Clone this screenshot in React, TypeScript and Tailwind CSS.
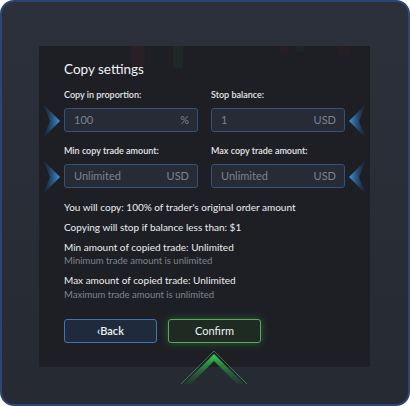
import React from "react";

const Chevron = ({ side }: { side: "left" | "right" }) => {
  const id = `chev-${side}`;
  return (
    <svg width="20" height="36" viewBox="0 0 20 36" className="block">
      <defs>
        <linearGradient id={id} x1={side === "left" ? "0" : "1"} y1="0" x2={side === "left" ? "1" : "0"} y2="0">
          <stop offset="0" stopColor="#1b3a66" stopOpacity="0.2" />
          <stop offset="1" stopColor="#3d9be9" stopOpacity="1" />
        </linearGradient>
      </defs>
      {side === "left" ? (
        <polygon points="1,1 18,18 1,35 8,18" fill={`url(#${id})`} />
      ) : (
        <polygon points="19,1 2,18 19,35 12,18" fill={`url(#${id})`} />
      )}
    </svg>
  );
};

const Field = ({ label, value, unit }: { label: string; value: string; unit: string }) => (
  <div className="flex flex-col">
    <div className="h-[14px] text-[9px] leading-[14px] font-semibold text-[#e4e6ea]">{label}</div>
    <div className="mt-[6px] h-[24px] flex items-center justify-between pl-[9px] pr-[8px] rounded-[3px] border border-[#35537a] bg-[#262b35] text-[11px] text-[#7d838e]">
      <span>{value}</span>
      <span>{unit}</span>
    </div>
  </div>
);

export default function App() {
  return (
    <div
      className="w-[410px] h-[406px] overflow-hidden rounded-[14px] border-2 border-[#2c4575] bg-gradient-to-b from-[#2c303a] to-[#262a33] pt-[44px] pl-[37px]"
      style={{ fontFamily: 'Lato, "Open Sans", sans-serif' }}
    >
      <div className="relative w-[331px] h-[321px] bg-[#1d1f24] pl-[25px] pr-[25px] pt-[14px]">
        {/* faint chart in background */}
        <div className="absolute left-[92px] top-0 w-[14px] h-[20px] bg-[#5a2328] opacity-20" />
        <div className="absolute left-[134px] top-0 w-[10px] h-[22px] bg-[#23502c] opacity-20" />
        <div className="absolute left-[240px] top-0 w-[10px] h-[8px] bg-[#5a2328] opacity-15" />
        <div className="absolute left-[257px] top-0 w-[8px] h-[6px] bg-[#23502c] opacity-15" />
        <div className="absolute left-[298px] top-0 w-[12px] h-[10px] bg-[#5a2328] opacity-15" />

        <div className="relative text-[13.5px] leading-[18px] text-[#f2f3f5]">Copy settings</div>

        <div className="relative mt-[10px] grid grid-cols-2 gap-x-[13px] gap-y-[12px]">
          <Field label="Copy in proportion:" value="100" unit="%" />
          <Field label="Stop balance:" value="1" unit="USD" />
          <Field label="Min copy trade amount:" value="Unlimited" unit="USD" />
          <Field label="Max copy trade amount:" value="Unlimited" unit="USD" />
          <div className="absolute left-[-22px] top-[15px]"><Chevron side="left" /></div>
          <div className="absolute right-[-22px] top-[15px]"><Chevron side="right" /></div>
          <div className="absolute left-[-22px] top-[71px]"><Chevron side="left" /></div>
          <div className="absolute right-[-22px] top-[71px]"><Chevron side="right" /></div>
        </div>

        <div className="relative mt-[9px] text-[10px] text-[#eceef1]">
          <div className="leading-[20px]">You will copy: 100% of trader's original order amount</div>
          <div className="leading-[20px]">Copying will stop if balance less than: $1</div>
          <div className="mt-[2px] leading-[16px]">Min amount of copied trade: Unlimited</div>
          <div className="text-[9.5px] leading-[12px] text-[#7f848d]">Minimum trade amount is unlimited</div>
          <div className="mt-[5px] leading-[16px]">Max amount of copied trade: Unlimited</div>
          <div className="mt-[1px] text-[9.5px] leading-[12px] text-[#7f848d]">Maximum trade amount is unlimited</div>
        </div>

        <div className="relative mt-[18px] flex gap-[11px]">
          <button className="w-[93px] h-[24px] rounded-[3px] border border-[#3f74b8] bg-[#1f2b3d] text-[11px] font-semibold text-[#eef1f5]">
            ‹Back
          </button>
          <button className="w-[93px] h-[24px] rounded-[3px] border border-[#56a862] bg-[#1e2a22] text-[11px] text-[#eef1f5] shadow-[0_0_8px_rgba(80,200,90,0.35)]">
            Confirm
          </button>
        </div>

        <svg className="absolute left-[140px] top-[305px]" width="70" height="34" viewBox="0 0 70 34">
          <defs>
            <linearGradient id="up" x1="0" y1="0" x2="0" y2="1">
              <stop offset="0" stopColor="#3fd35a" />
              <stop offset="1" stopColor="#1d6b2b" stopOpacity="0.2" />
            </linearGradient>
          </defs>
          <polygon points="35,3 65,33 58,33 35,10 12,33 5,33" fill="url(#up)" />
          <polyline points="2,33 35,0 68,33" fill="none" stroke="#45c060" strokeWidth="0.8" opacity="0.7" />
        </svg>
      </div>
    </div>
  );
}
